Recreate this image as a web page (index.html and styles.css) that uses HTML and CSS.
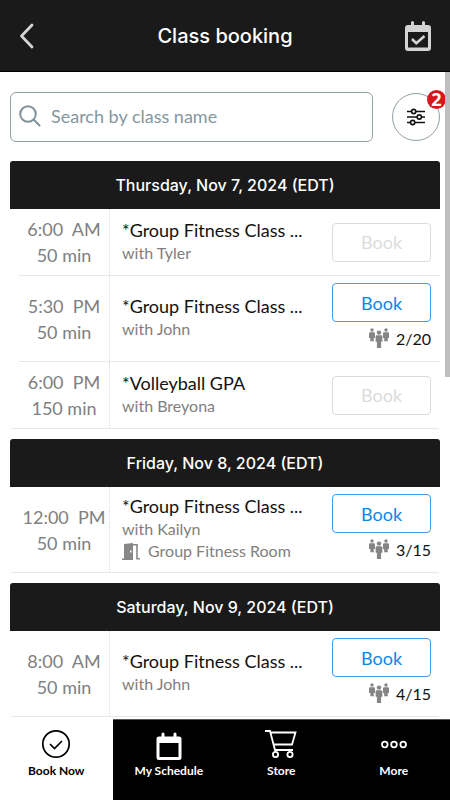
FILE: index.html
```
<!DOCTYPE html>
<html lang="en">
<head>
    <meta charset="UTF-8">
    <meta name="viewport" content="width=device-width, initial-scale=1.0">
    <title>Class booking</title>
    <link rel="stylesheet" href="styles.css">
</head>
<body>
    <!-- Shared icons -->
    <svg class="sprite" aria-hidden="true">
        <symbol id="people" viewBox="0 0 20 20">
            <circle cx="3" cy="2" r="1.700"/>
            <path d="M1.200 4.200h3.600q1.200 0 1.200 1.200V10H4.800v3.300H1.300V10H0V5.400q0-1.200 1.200-1.200z"/>
            <circle cx="17" cy="2" r="1.700"/>
            <path d="M15.200 4.200h3.600q1.200 0 1.200 1.200V10h-1.200v3.300h-3.600V10H14V5.400q0-1.200 1.200-1.200z"/>
            <circle cx="10" cy="4.600" r="2.200"/>
            <path d="M8 7.300h4q1.400 0 1.400 1.400v5.100h-1.300V20H7.900v-6.200H6.600V8.700q0-1.400 1.400-1.400z"/>
        </symbol>
    </svg>

    <div class="app">
        <header class="topbar">
            <button type="button" class="icon-btn" aria-label="Back">
                <svg width="16" height="26" viewBox="0 0 16 26" fill="none" stroke="#d4d4d4" stroke-width="2.800" stroke-linecap="round" stroke-linejoin="round"><path d="M13 2L2.500 13 13 24"/></svg>
            </button>
            <h1>Class booking</h1>
            <button type="button" class="icon-btn" aria-label="My calendar">
                <svg width="26" height="30" viewBox="0 0 26 30">
                    <path fill="#d4d4d4" fill-rule="evenodd" d="M6 1.500a1.500 1.500 0 0 1 3 0V4h8V1.500a1.500 1.500 0 0 1 3 0V4h3a3 3 0 0 1 3 3v20a3 3 0 0 1-3 3H3a3 3 0 0 1-3-3V7a3 3 0 0 1 3-3h3zM3 11v15.500h20V11z"/>
                    <path fill="none" stroke="#d4d4d4" stroke-width="2.600" d="M7 18l4.300 4.300L19.500 15"/>
                </svg>
            </button>
        </header>

        <main class="content">
            <form class="search-row">
                <div class="search-box">
                    <svg width="22" height="22" viewBox="0 0 22 22" fill="none" stroke="#82929b" stroke-width="2" stroke-linecap="round"><circle cx="9" cy="9" r="7.800"/><path d="M14.800 14.800L20.500 20.500"/></svg>
                    <input type="text" id="search" aria-label="Search by class name" placeholder="Search by class name">
                </div>
                <button type="button" class="filter-btn" aria-label="Filters">
                    <svg width="18" height="18" viewBox="0 0 18 18" fill="none" stroke="#111" stroke-width="1.600">
                        <path d="M0 3.500h4.500M9 3.500h9M0 9h10M14.500 9H18M0 14.500h3.500M8 14.500h10"/>
                        <circle cx="6.700" cy="3.500" r="2.100"/><circle cx="12.300" cy="9" r="2.100"/><circle cx="5.700" cy="14.500" r="2.100"/>
                    </svg>
                    <span class="badge">2</span>
                </button>
            </form>

            <section class="day">
                <h2>Thursday, Nov 7, 2024 (EDT)</h2>
                <div class="class-row">
                    <div class="time">6:00&nbsp; AM<br>50 min</div>
                    <div class="details">
                        <h3>*Group Fitness Class ...</h3>
                        <p>with Tyler</p>
                    </div>
                    <div class="action">
                        <button type="button" class="book" disabled>Book</button>
                    </div>
                </div>
                <div class="class-row">
                    <div class="time">5:30&nbsp; PM<br>50 min</div>
                    <div class="details">
                        <h3>*Group Fitness Class ...</h3>
                        <p>with John</p>
                    </div>
                    <div class="action">
                        <button type="button" class="book">Book</button>
                        <div class="count"><svg><use href="#people"/></svg>2/20</div>
                    </div>
                </div>
                <div class="class-row">
                    <div class="time">6:00&nbsp; PM<br>150 min</div>
                    <div class="details">
                        <h3>*Volleyball GPA</h3>
                        <p>with Breyona</p>
                    </div>
                    <div class="action">
                        <button type="button" class="book" disabled>Book</button>
                    </div>
                </div>
            </section>

            <section class="day">
                <h2>Friday, Nov 8, 2024 (EDT)</h2>
                <div class="class-row">
                    <div class="time">12:00&nbsp; PM<br>50 min</div>
                    <div class="details">
                        <h3>*Group Fitness Class ...</h3>
                        <p>with Kailyn</p>
                        <p class="room">
                            <svg width="18" height="17" viewBox="0 0 18 17"><path fill="#888" fill-rule="evenodd" d="M2 1l9-1v17H0v-1.500h2zM8 7.500v2h1.500v-2z"/><path fill="none" stroke="#888" stroke-width="1.600" d="M11 1.800h4v14h3"/></svg>
                            Group Fitness Room
                        </p>
                    </div>
                    <div class="action">
                        <button type="button" class="book">Book</button>
                        <div class="count"><svg><use href="#people"/></svg>3/15</div>
                    </div>
                </div>
            </section>

            <section class="day">
                <h2>Saturday, Nov 9, 2024 (EDT)</h2>
                <div class="class-row">
                    <div class="time">8:00&nbsp; AM<br>50 min</div>
                    <div class="details">
                        <h3>*Group Fitness Class ...</h3>
                        <p>with John</p>
                    </div>
                    <div class="action">
                        <button type="button" class="book">Book</button>
                        <div class="count"><svg><use href="#people"/></svg>4/15</div>
                    </div>
                </div>
            </section>
        </main>
        <div class="scroll-thumb"></div>

        <nav class="tabs">
            <a href="#" class="active">
                <svg width="32" height="30" viewBox="0 0 32 30" fill="none" stroke="#000" stroke-width="1.700"><circle cx="16" cy="15" r="13.200"/><path d="M10 15l4.500 4.500L22 12"/></svg>
                Book Now
            </a>
            <a href="#">
                <svg width="32" height="30" viewBox="0 0 32 30"><path fill="#fff" fill-rule="evenodd" d="M8.500 5a1.500 1.500 0 0 1 3 0v2.500h9V5a1.500 1.500 0 0 1 3 0v2.500H26a2.500 2.500 0 0 1 2.500 2.500v18.500a2.500 2.500 0 0 1-2.500 2.500H6A2.500 2.500 0 0 1 3.500 28.500V10A2.500 2.500 0 0 1 6 7.500h2.500zM6.500 14v14h19v-14z"/></svg>
                My Schedule
            </a>
            <a href="#">
                <svg width="32" height="30" viewBox="0 0 32 30" fill="none" stroke="#fff" stroke-width="1.800"><path d="M0 2h5l5 19h18M5.500 3.500h25L27 15.500H8.500"/><circle cx="10.500" cy="25.500" r="2.600"/><circle cx="25" cy="25.500" r="2.600"/></svg>
                Store
            </a>
            <a href="#">
                <svg width="32" height="30" viewBox="0 0 32 30" fill="none" stroke="#fff" stroke-width="1.800"><circle cx="6.800" cy="15.500" r="2.800"/><circle cx="16" cy="15.500" r="2.800"/><circle cx="25.200" cy="15.500" r="2.800"/></svg>
                More
            </a>
        </nav>
    </div>
</body>
</html>
```

FILE: styles.css
```
* {
    box-sizing: border-box;
}
body {
    margin: 0;
    font-family: Lato, "Open Sans", sans-serif;
    background: #fff;
    color: #111;
}
h1, h2, h3, p {
    margin: 0;
    font-weight: 400;
}
button, input {
    font-family: inherit;
}
.sprite {
    display: none;
}
.app {
    display: flex;
    flex-direction: column;
    height: 100vh;
    position: relative;
}

/* Top bar */
.topbar {
    display: flex;
    align-items: center;
    justify-content: space-between;
    flex-shrink: 0;
    height: 72px;
    padding: 0 18px;
    background: #1a1a1a;
    border-bottom: 1px solid #000;
}
.topbar h1 {
    font-family: Inter, sans-serif;
    font-size: 20px;
    font-weight: 500;
    color: #fff;
}
.icon-btn {
    display: flex;
    width: 28px;
    padding: 0 1px;
    border: 0;
    background: none;
}

/* Search */
.content {
    flex: 1;
    min-height: 0;
    padding: 20px 10px 0;
    overflow-y: auto;
    scrollbar-width: none;
}
.search-row {
    display: flex;
    align-items: center;
    gap: 19px;
    margin-bottom: 19px;
}
.search-box {
    display: flex;
    align-items: center;
    flex: 1;
    gap: 10px;
    height: 50px;
    padding: 0 8px 2px;
    border: 1px solid #93a0a8;
    border-radius: 6px;
}
.search-box input {
    flex: 1;
    min-width: 0;
    padding: 0;
    border: 0;
    outline: 0;
    font-size: 18px;
    color: #111;
}
.search-box input::placeholder {
    color: #8497a0;
}
.filter-btn {
    position: relative;
    display: flex;
    align-items: center;
    justify-content: center;
    width: 48px;
    height: 48px;
    padding: 0;
    border: 1px solid #93a0a8;
    border-radius: 50%;
    background: #fff;
}
.badge {
    position: absolute;
    top: -4px;
    right: -7px;
    width: 19px;
    height: 19px;
    border-radius: 50%;
    background: #d8161b;
    color: #fff;
    font-family: "Open Sans", sans-serif;
    font-size: 18px;
    font-weight: 700;
    line-height: 19px;
    text-align: center;
}
.scroll-thumb {
    position: absolute;
    top: 72px;
    right: 0;
    width: 5px;
    height: 305px;
    background: #bfbfbf;
}

/* Days */
.day {
    margin-bottom: 10px;
    border-radius: 3px;
    overflow: hidden;
}
.day h2 {
    background: #1a1a1a;
    color: #fff;
    font-family: Inter, sans-serif;
    font-size: 16px;
    font-weight: 500;
    line-height: 48px;
    text-align: center;
}
.class-row {
    display: flex;
    min-height: 67px;
    margin-left: 9px;
    padding-right: 9px;
    border-bottom: 1px solid #e4eaec;
}
.class-row:last-child {
    margin-left: 0;
    padding-left: 9px;
}
.time {
    display: flex;
    flex-direction: column;
    justify-content: center;
    width: 91px;
    border-right: 1px dotted #d5dadc;
    color: #808080;
    font-size: 18px;
    line-height: 26px;
    text-align: center;
}
.details {
    flex: 1;
    min-width: 0;
    align-self: center;
    padding: 0 0 3px 12px;
}
.details h3 {
    font-size: 18px;
    line-height: 24px;
    white-space: nowrap;
}
.details p {
    color: #808080;
    font-size: 16px;
    line-height: 22px;
}
.details .room {
    display: flex;
    align-items: center;
    gap: 8px;
    white-space: nowrap;
}
.action {
    display: flex;
    flex-direction: column;
    justify-content: center;
    gap: 4px;
    padding: 7px 0;
}
.book {
    width: 99px;
    height: 39px;
    padding: 0;
    border: 1px solid #3f9cee;
    border-radius: 4px;
    background: #fff;
    color: #0a88e6;
    font-size: 18px;
}
.book:disabled {
    border-color: #dcdcdc;
    color: #dcdcdc;
}
.count {
    display: flex;
    align-items: center;
    justify-content: flex-end;
    gap: 7px;
    height: 28px;
    padding-bottom: 4px;
    font-size: 16px;
}
.count svg {
    width: 20px;
    height: 20px;
    fill: #858585;
}

/* Bottom tabs */
.tabs {
    display: grid;
    grid-template-columns: repeat(4, 1fr);
    flex-shrink: 0;
    height: 81px;
    background: #000;
}
.tabs a {
    display: flex;
    flex-direction: column;
    align-items: center;
    gap: 4px;
    padding-top: 9px;
    border-top: 1px solid #555;
    color: #fff;
    font-size: 12px;
    font-weight: 700;
    line-height: 16px;
    text-decoration: none;
}
.tabs svg {
    overflow: visible;
}
.tabs .active {
    border-color: #fff;
    background: #fff;
    color: #000;
}
```
